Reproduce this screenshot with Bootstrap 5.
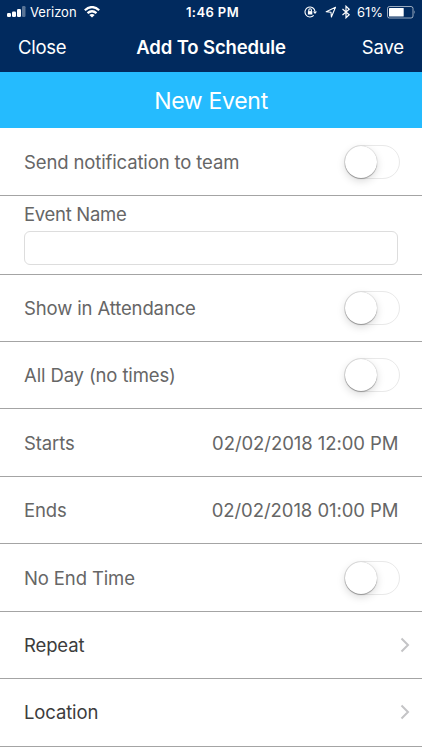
<!DOCTYPE html>
<html lang="en">
<head>
<meta charset="utf-8">
<meta name="viewport" content="width=device-width, initial-scale=1">
<title>Add To Schedule</title>
<link rel="stylesheet" href="https://cdn.jsdelivr.net/npm/bootstrap@5.3.0/dist/css/bootstrap.min.css">
<style>
body{font-family:Inter,"Liberation Sans",sans-serif;background:#fff;color:#666;height:750px;overflow:hidden;font-size:18.5px;line-height:24px;letter-spacing:-.13px}
.top-area{background:#012a5e;height:72px;color:#fff}
.status-bar{height:24px;padding:0 6px 0 7px;font-size:13px;line-height:24px;letter-spacing:0;display:grid;grid-template-columns:1fr auto 1fr}
.status-bar svg{display:block;flex:none}
.carrier{margin-left:4px;margin-right:7px}
.clock{font-weight:600;letter-spacing:.4px;padding-left:2px}
.percent{margin:0 4px 0 6px}
.title-bar{height:46px;padding:0 18px;display:grid;grid-template-columns:1fr auto 1fr;align-items:center}
.title-bar a{color:#fff;text-decoration:none}
.bar-close{letter-spacing:-.25px}
.title-bar h1{font-size:18.5px;font-weight:600;line-height:24px;margin:0}
.banner{background:#25bbfe;height:56px;padding-top:2px;color:#fff;font-size:23px;letter-spacing:-.3px}
.event-row{height:67.45px;padding:0 22px 0 24px;border-bottom:1px solid #a4a4a4}
.name-row{height:78.6px;padding:7px 24px 0;border-bottom:1px solid #a4a4a4}
.name-row label{display:block;line-height:23px;letter-spacing:-.3px}
.name-row .form-control{height:34px;border:1px solid #ddd;border-radius:6px;margin-top:5px;padding:0 8px}
.first-row{height:68px}
.switch{width:56px;height:34px;border:1px solid #e9e9e9;border-radius:17px}
.knob{width:32px;height:32px;border-radius:50%;background:#fff;box-shadow:0 3px 8px rgba(0,0,0,.15),0 1px 1px rgba(0,0,0,.27),0 0 1px rgba(0,0,0,.3)}
.date-text{letter-spacing:-.06px;padding-right:1.5px}
.link-row{color:#3c3c3c;padding-right:12px}
</style>
</head>
<body>
<header class="top-area">
  <div class="status-bar">
    <div class="d-flex align-items-center">
      <svg width="19" height="12" viewBox="0 0 19 12" fill="#fff"><rect x="0" y="7" width="4" height="4" rx="1.2"/><rect x="5" y="5.4" width="4" height="5.6" rx="1.2"/><rect x="10" y="3" width="4" height="8" rx="1.2"/><rect x="15" y="0" width="3.5" height="11" rx="1.2" opacity=".35"/></svg>
      <span class="carrier">Verizon</span>
      <svg width="16" height="12" viewBox="0 0 16 12" fill="none" stroke="#fff" stroke-width="2.2"><path d="M.8 4.3Q8-2.2 15.2 4.3M3.5 7.2Q8 3.3 12.5 7.2"/><path d="M8 11.5L5.3 8.9Q8 6.9 10.7 8.9Z" fill="#fff" stroke="none"/></svg>
    </div>
    <span class="clock">1:46 PM</span>
    <div class="d-flex align-items-center justify-content-end">
      <svg width="13" height="12" viewBox="0 0 13 12" fill="none" stroke="#fff" stroke-width="1.1"><path d="M9.7 9.4A5 5 0 1 1 11 5.5"/><path d="M9 5.5h4L11 8z" fill="#fff" stroke="none"/><rect x="3.9" y="5.1" width="4.4" height="3.4" fill="#fff" stroke="none"/><path d="M4.8 5.3V4a1.3 1.3 0 0 1 2.6 0v1.3"/></svg>
      <svg class="ms-2" width="12" height="12" viewBox="0 0 12 12" fill="none" stroke="#fff" stroke-width="1.1" stroke-linejoin="round"><path d="M10.5 1.3L1.2 5.8L6 6.2L6.4 11Z"/></svg>
      <svg class="ms-1" width="10" height="14" viewBox="0 0 10 14" fill="none" stroke="#fff" stroke-width="1.2"><path d="M1.5 4L8.2 9.8L5 12.8V1.2L8.2 4.2L1.5 10"/></svg>
      <span class="percent">61%</span>
      <svg width="29" height="13" viewBox="0 0 29 13"><rect x=".5" y=".5" width="25.5" height="11.5" rx="2" fill="none" stroke="#fff" stroke-opacity=".6"/><rect x="2" y="2" width="14.7" height="8.5" rx=".6" fill="#fff"/><path d="M27.3 4.2q1.7 2 0 4z" fill="#fff" opacity=".6"/></svg>
    </div>
  </div>
  <nav class="title-bar"><a href="#" class="bar-close">Close</a><h1>Add To Schedule</h1><a href="#" class="text-end bar-save">Save</a></nav>
</header>
<div class="banner d-flex align-items-center justify-content-center"><span>New Event</span></div>
<main>
  <div class="event-row first-row d-flex align-items-center justify-content-between"><span>Send notification to team</span><div class="switch" role="switch"><div class="knob"></div></div></div>
  <div class="name-row"><label for="eventName"><span>Event Name</span></label><input class="form-control" id="eventName" type="text"></div>
  <div class="event-row d-flex align-items-center justify-content-between"><span>Show in Attendance</span><div class="switch" role="switch"><div class="knob"></div></div></div>
  <div class="event-row d-flex align-items-center justify-content-between"><span>All Day (no times)</span><div class="switch" role="switch"><div class="knob"></div></div></div>
  <div class="event-row d-flex align-items-center justify-content-between"><span>Starts</span><span class="date-text">02/02/2018 12:00 PM</span></div>
  <div class="event-row d-flex align-items-center justify-content-between"><span>Ends</span><span class="date-text">02/02/2018 01:00 PM</span></div>
  <div class="event-row d-flex align-items-center justify-content-between"><span>No End Time</span><div class="switch" role="switch"><div class="knob"></div></div></div>
  <div class="event-row link-row d-flex align-items-center justify-content-between"><span>Repeat</span><svg width="10" height="16" viewBox="0 0 10 16" fill="none" stroke="#c4c4c6" stroke-width="2"><path d="M1.5 1.5L8 8L1.5 14.5"/></svg></div>
  <div class="event-row link-row d-flex align-items-center justify-content-between"><span>Location</span><svg width="10" height="16" viewBox="0 0 10 16" fill="none" stroke="#c4c4c6" stroke-width="2"><path d="M1.5 1.5L8 8L1.5 14.5"/></svg></div>
</main>
<script src="https://cdn.jsdelivr.net/npm/bootstrap@5.3.0/dist/js/bootstrap.bundle.min.js"></script>
</body>
</html>
